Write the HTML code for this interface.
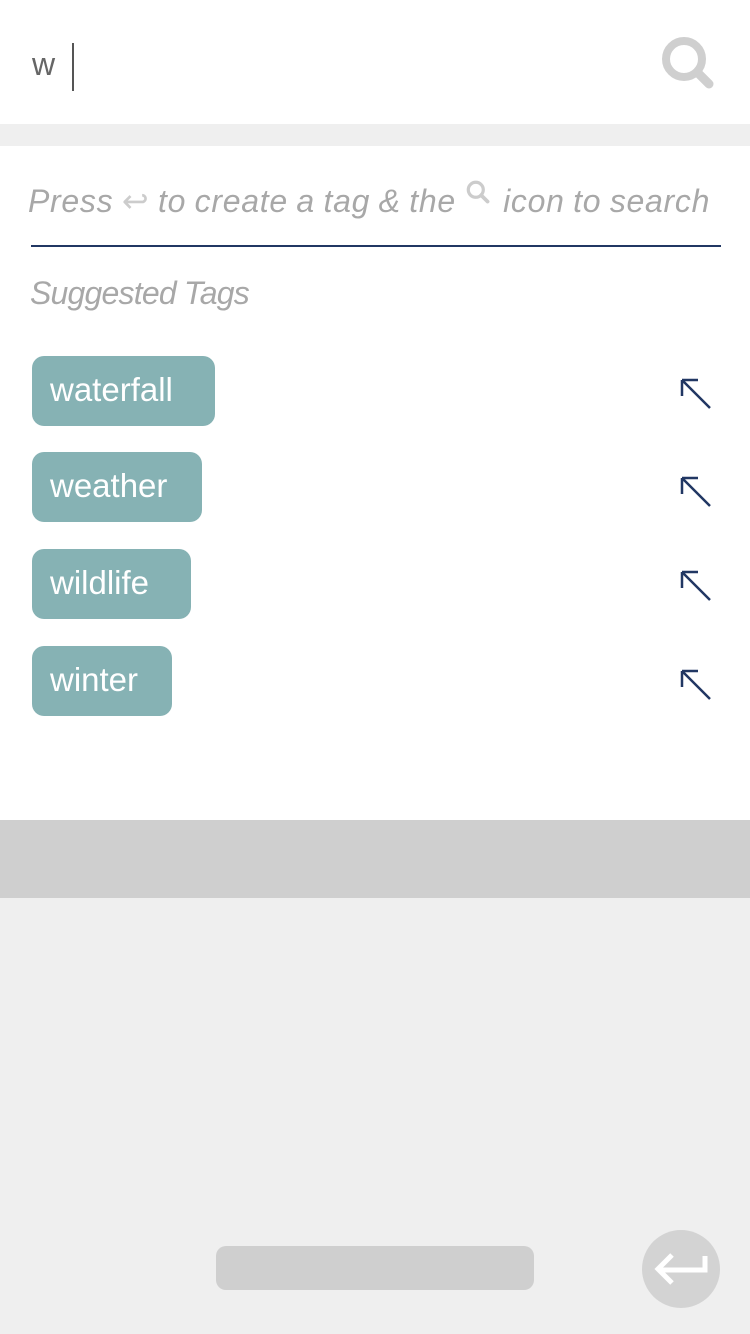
<!DOCTYPE html>
<html><head><meta charset="utf-8"><style>
body{margin:0;width:750px;height:1334px;background:#efefef;font-family:"Liberation Sans",sans-serif;position:relative;overflow:hidden}
.abs{position:absolute}
.top{left:0;top:0;width:750px;height:124px;background:#fff}
.panel{left:0;top:146px;width:750px;height:674px;background:#fff}
.hint{left:28px;top:178px;font-style:italic;font-size:32px;color:#a8a8a8;letter-spacing:0.7px;word-spacing:-1px;white-space:nowrap}
.line{left:31px;top:245px;width:690px;height:2px;background:#213763}
.sug{left:30px;top:275px;font-style:italic;font-size:32px;color:#a8a8a8;letter-spacing:-0.8px}
.chip{left:32px;height:70px;background:#86b2b4;border-radius:12px;color:#fff;font-size:33px;line-height:68px;padding:0 18px;box-sizing:border-box}
.arr{left:678px}
</style></head><body>
<div class="abs top"></div>
<div class="abs" style="left:32px;top:46px;font-size:32px;color:#666">w</div>
<div class="abs" style="left:72px;top:43px;width:2px;height:48px;background:#555"></div>
<svg class="abs" style="left:656px;top:30px" width="64" height="64" viewBox="0 0 64 64"><circle cx="28" cy="29" r="18" fill="none" stroke="#cfcfcf" stroke-width="8"/><line x1="42" y1="43" x2="53" y2="54" stroke="#cfcfcf" stroke-width="9" stroke-linecap="round"/></svg>
<div class="abs panel"></div>
<div class="abs hint">Press <span style="font-style:normal;color:#ccc">↩</span> to create a tag &amp; the <svg width="30" height="30" viewBox="0 0 28 28" style="vertical-align:4px"><circle cx="11" cy="11" r="7" fill="none" stroke="#ccc" stroke-width="3"/><line x1="16" y1="16" x2="22" y2="22" stroke="#ccc" stroke-width="3.5" stroke-linecap="round"/></svg> icon to search</div>
<div class="abs line"></div>
<div class="abs sug">Suggested Tags</div>
<div class="abs chip" style="top:356px;width:183px">waterfall</div>
<div class="abs chip" style="top:452px;width:170px">weather</div>
<div class="abs chip" style="top:549px;width:159px">wildlife</div>
<div class="abs chip" style="top:646px;width:140px">winter</div>
<svg class="abs arr" style="top:376px" width="36" height="36" viewBox="0 0 36 36"><path d="M4 4L32 32M4 4H20M4 4V20" fill="none" stroke="#213763" stroke-width="2.5"/></svg>
<svg class="abs arr" style="top:474px" width="36" height="36" viewBox="0 0 36 36"><path d="M4 4L32 32M4 4H20M4 4V20" fill="none" stroke="#213763" stroke-width="2.5"/></svg>
<svg class="abs arr" style="top:568px" width="36" height="36" viewBox="0 0 36 36"><path d="M4 4L32 32M4 4H20M4 4V20" fill="none" stroke="#213763" stroke-width="2.5"/></svg>
<svg class="abs arr" style="top:667px" width="36" height="36" viewBox="0 0 36 36"><path d="M4 4L32 32M4 4H20M4 4V20" fill="none" stroke="#213763" stroke-width="2.5"/></svg>
<div class="abs" style="left:0;top:820px;width:750px;height:78px;background:#cfcfcf"></div>
<div class="abs" style="left:216px;top:1246px;width:318px;height:44px;background:#cfcfcf;border-radius:10px"></div>
<div class="abs" style="left:642px;top:1230px;width:78px;height:78px;border-radius:50%;background:#d3d3d3"></div>
<svg class="abs" style="left:642px;top:1230px" width="78" height="78" viewBox="0 0 78 78"><path d="M63 26V40H18M30 25L16 39L30 53" fill="none" stroke="#fff" stroke-width="5"/></svg>
</body></html>
